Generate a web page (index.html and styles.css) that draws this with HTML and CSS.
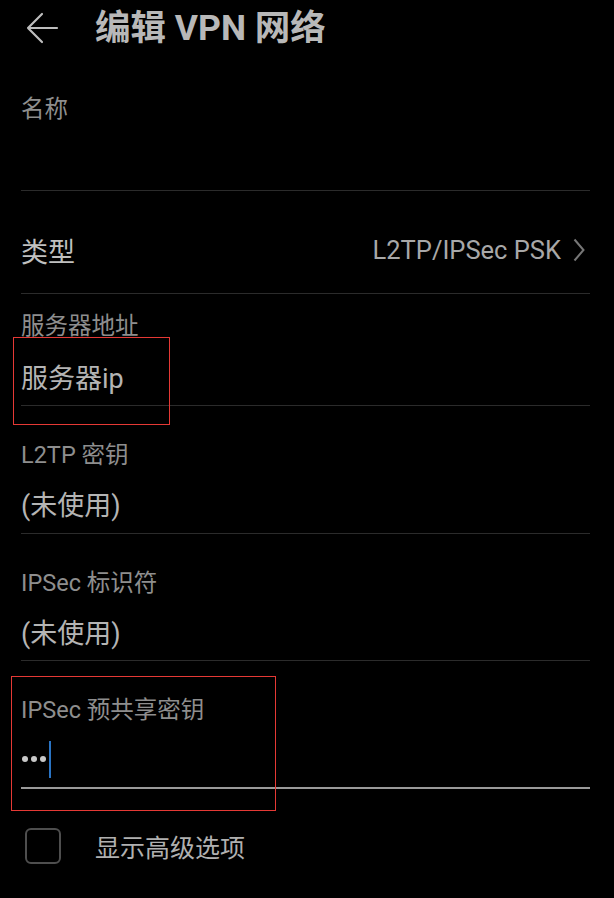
FILE: index.html
```html
<!DOCTYPE html>
<html lang="zh-CN">
<head>
<meta charset="utf-8">
<title>编辑 VPN 网络</title>
<link rel="stylesheet" href="styles.css">
</head>
<body>
<div class="screen">
  <header class="topbar">
    <svg class="back" width="34" height="34" viewBox="0 0 34 34" aria-hidden="true">
      <path d="M32 17H3 M17 3 L3 17 L17 31" fill="none" stroke="#bdbdbd" stroke-width="2.2" stroke-linecap="round" stroke-linejoin="round"/>
    </svg>
    <h1 class="title">编辑 VPN 网络</h1>
  </header>

  <main class="form">
    <section class="field field-name">
      <div class="label">名称</div>
    </section>

    <section class="field field-type">
      <div class="type-label">类型</div>
      <div class="type-value">
        <span>L2TP/IPSec PSK</span>
        <svg class="chev" width="12" height="24" viewBox="0 0 12 24" aria-hidden="true">
          <path d="M1.5 1.5 L10.5 12 L1.5 22.5" fill="none" stroke="#767676" stroke-width="2"/>
        </svg>
      </div>
    </section>

    <section class="field field-server">
      <div class="label">服务器地址</div>
      <div class="value">服务器ip</div>
    </section>

    <section class="field field-l2tp">
      <div class="label">L2TP 密钥</div>
      <div class="value">(未使用)</div>
    </section>

    <section class="field field-id">
      <div class="label">IPSec 标识符</div>
      <div class="value">(未使用)</div>
    </section>

    <section class="field field-psk">
      <div class="label">IPSec 预共享密钥</div>
      <div class="value pwd"><span class="dots"><i></i><i></i><i></i></span><span class="caret"></span></div>
    </section>

    <label class="check-row">
      <span class="checkbox"></span>
      <span class="check-text">显示高级选项</span>
    </label>
  </main>

  <div class="mark mark-server"></div>
  <div class="mark mark-psk"></div>
</div>
</body>
</html>
```

FILE: styles.css
```css
* { box-sizing: border-box; }

html, body {
  margin: 0;
  padding: 0;
  background: #000;
}

body {
  font-family: "Roboto", "Noto Sans CJK SC", sans-serif;
  color: #bdbdbd;
}

.screen {
  position: relative;
  width: 614px;
  height: 898px;
  overflow: hidden;
  background: #000;
}

.topbar {
  height: 58px;
  display: flex;
  align-items: center;
  padding-left: 25px;
}

.back {
  display: block;
  margin-top: -2px;
}

.title {
  margin: 0 0 0 36px;
  font-size: 35.5px;
  font-weight: 700;
  color: #b8b8b8;
  line-height: 1;
}

.form {
  padding: 0 24px 0 21px;
}

.field {
  border-bottom: 1px solid #2b2b2b;
  display: flex;
  flex-direction: column;
}

.label {
  font-size: 23.5px;
  line-height: 30px;
  color: #8e8e8e;
}

.value {
  font-size: 27px;
  line-height: 34px;
  color: #b4b4b4;
}

.field-name {
  height: 133px;
  padding-top: 36px;
}

.field-type {
  height: 103px;
  flex-direction: row;
  align-items: center;
  justify-content: space-between;
  padding-top: 16px;
}

.type-label {
  font-size: 27px;
  color: #c0c0c0;
}

.type-value {
  display: flex;
  align-items: center;
  gap: 12px;
  font-size: 25.5px;
  color: #a8a8a8;
  margin-right: 5px;
}

.chev { display: block; }

.field-server {
  height: 112px;
  padding-top: 17px;
}

.field-server .value { margin-top: 21px; }

.field-l2tp,
.field-id {
  height: 128px;
  padding-top: 34px;
}

.field-id { height: 127px; }

.field-l2tp .value,
.field-id .value { margin-top: 19px; }

.field-psk {
  height: 128px;
  padding-top: 34px;
  border-bottom: 2px solid #9a9a9a;
}

.pwd {
  display: flex;
  align-items: center;
  height: 38px;
  margin-top: 15px;
}

.dots {
  display: flex;
  gap: 3px;
  margin-left: 1px;
}

.dots i {
  display: block;
  width: 6px;
  height: 6px;
  border-radius: 50%;
  background: #c8c8c8;
}

.caret {
  display: block;
  width: 2px;
  height: 37px;
  margin-left: 3px;
  background: #2a74c4;
}

.check-row {
  display: flex;
  align-items: center;
  height: 120px;
  padding-left: 4px;
  padding-bottom: 6px;
}

.checkbox {
  width: 36px;
  height: 36px;
  border: 2px solid #4e4e4e;
  border-radius: 6px;
}

.check-text {
  margin-left: 34px;
  font-size: 25px;
  color: #b0b0b0;
}

.mark {
  position: absolute;
  border: 1px solid #e53935;
  pointer-events: none;
}

.mark-server {
  left: 13px;
  top: 337px;
  width: 157px;
  height: 88px;
}

.mark-psk {
  left: 11px;
  top: 676px;
  width: 265px;
  height: 135px;
}
```
